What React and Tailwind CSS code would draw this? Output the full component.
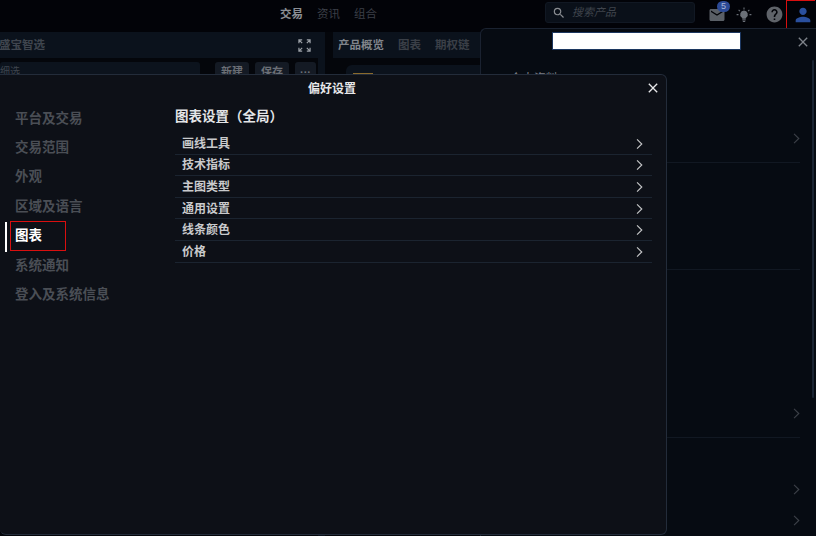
import React from 'react';
import { MdEmail, MdHelp, MdPerson, MdClose, MdSearch } from 'react-icons/md';

const navItems = ['平台及交易', '交易范围', '外观', '区域及语言', '图表', '系统通知', '登入及系统信息'];
const rows = ['画线工具', '技术指标', '主图类型', '通用设置', '线条颜色', '价格'];
const font = "font-['Liberation_Sans','Noto_Sans_CJK_SC',sans-serif]";

const Chevron = ({ className }) => (
  <svg viewBox="0 0 8 12" fill="none" stroke="currentColor" strokeWidth="1.3" className={className}>
    <path d="M1.2 0.8 L6.6 6 L1.2 11.2" />
  </svg>
);

const Bulb = () => (
  <svg viewBox="0 0 16 16" className="w-4 h-4 text-[#6b7078]" fill="currentColor">
    <path d="M8 3.6a3.9 3.9 0 0 0-2.3 7c.4.3.6.7.6 1.1h3.4c0-.4.2-.8.6-1.1A3.9 3.9 0 0 0 8 3.6z" />
    <rect x="6.3" y="12.3" width="3.4" height="1.1" />
    <rect x="6.8" y="13.9" width="2.4" height="1.1" />
    <path d="M8 .6v1.9M2.6 2.8l1.3 1.3M13.4 2.8l-1.3 1.3M.6 7.6h1.9M13.5 7.6h1.9" stroke="currentColor" strokeWidth="1.1" />
  </svg>
);

const TopBar = () => (
  <div className="relative h-[32px] flex items-start bg-[#020308] shrink-0">
    <div className="flex-1 pl-[280px] pt-[6px] flex gap-[14px] text-[11.5px] leading-[16px]">
      <span className="text-[#8b8e94] font-bold">交易</span>
      <span className="text-[#3b3f47]">资讯</span>
      <span className="text-[#3b3f47]">组合</span>
    </div>
    <div className="mt-[2px] w-[150px] h-[21px] flex items-center gap-[6px] pl-[6px] bg-[#0a1019] border border-[#111823] rounded-[3px]">
      <MdSearch className="w-[14px] h-[14px] text-[#8a8d92]" />
      <span className="text-[#3f444c] text-[11px] italic">搜索产品</span>
    </div>
    <div className="relative w-[121px] h-[29px] pl-[13px] flex items-center">
      <div className="relative w-[18px] h-[18px] shrink-0">
        <MdEmail className="w-[18px] h-[18px] text-[#5a5f66]" />
        <span className="absolute -top-[5px] left-[9px] w-[13px] h-[11px] rounded-full bg-[#2c4a96] text-[#a9b6d6] text-[9px] leading-[11px] text-center">5</span>
      </div>
      <div className="ml-[10px] shrink-0"><Bulb /></div>
      <MdHelp className="ml-[13px] w-[19px] h-[19px] text-[#5f6369] shrink-0" />
      <div className="ml-[2px] w-[29px] h-[29px] shrink-0 border border-r-0 border-[#d90f0f] pl-[3px] flex items-center justify-center">
        <MdPerson className="w-[22px] h-[22px] text-[#2a4f9e]" />
      </div>
    </div>
  </div>
);

const Background = () => (
  <div className="flex-1 flex gap-[8px] overflow-hidden">
    <div className="w-[325px] bg-[#0b121c] pr-[7px]">
      <div className="h-[26px] pt-[1px] flex items-center justify-between pr-[7px]">
        <span className="text-[#3f454e] text-[11.5px] font-bold -ml-[1px]">盛宝智选</span>
        <svg viewBox="0 0 14 14" className="w-[13px] h-[13px] text-[#9ba0a6]" fill="none" stroke="currentColor" strokeWidth="1.3">
          <path d="M1 4.5V1h3.5M9.5 1H13v3.5M1 9.5V13h3.5M13 9.5V13H9.5M1 1l3.5 3.5M13 1L9.5 4.5M1 13l3.5-3.5M13 13L9.5 9.5" />
        </svg>
      </div>
      <div className="h-full bg-[#04060b] pt-[4px] flex items-start pr-[2px]">
        <div className="w-[200px] h-[20px] bg-[#0c131d] rounded-[3px] text-[10px] leading-[20px] text-[#3f454e]">细选</div>
        <div className="flex gap-[6px] ml-[15px]">
          <div className="w-[34px] h-[20px] bg-[#141a24] rounded-[3px] text-center text-[11px] font-bold leading-[20px] text-[#6b6f76]">新建</div>
          <div className="w-[34px] h-[20px] bg-[#141a24] rounded-[3px] text-center text-[11px] font-bold leading-[20px] text-[#6b6f76]">保存</div>
          <div className="w-[21px] h-[20px] bg-[#141a24] rounded-[3px] text-center text-[11px] font-bold leading-[20px] text-[#6b6f76]">···</div>
        </div>
      </div>
    </div>
    <div className="flex-1 flex flex-col">
      <div className="h-[26px] pt-[1px] bg-[#0b121c] flex items-center gap-[14px] pl-[5px] text-[11.5px] font-bold shrink-0">
        <span className="text-[#80848b]">产品概览</span>
        <span className="text-[#3a3f47]">图表</span>
        <span className="text-[#3a3f47]">期权链</span>
      </div>
      <div className="pt-[7px] pl-[13px]">
        <div className="h-[40px] bg-[#0b121c] rounded-tl-[6px] pl-[7px] pt-[8px]">
          <div className="w-[20px] h-[2px] bg-[#8a6a2c]" />
        </div>
      </div>
    </div>
  </div>
);

const SidePanel = () => (
  <div className="absolute top-[28px] left-[480px] right-0 bottom-0 bg-[#060b12] border-l border-t border-[#1a2230] rounded-tl-[6px]">
    <div className="absolute left-[71px] top-[3px] w-[189px] h-[18px] bg-white border border-[#1c3760]" />
    <MdClose className="absolute top-[5px] right-[5px] w-[16px] h-[16px] text-[#7e838a]" />
    <div className="absolute right-[2px] top-[31px] w-[2px] h-[338px] bg-[#1a2432] rounded-full" />
    <div className="ml-[11px] mr-[16px] pt-[43px] text-[#3c4048]">
      <div className="h-[57px] flex items-start gap-[11px] text-[12px] leading-[14px] text-[#7a7e85]">
        <MdPerson className="w-[12px] h-[12px] -ml-[2px]" />
        <span className="-ml-[3px]">个人资料</span>
      </div>
      <div className="h-[33px] flex items-start justify-end pt-[4px]"><Chevron className="w-[7px] h-[11px]" /></div>
      <div className="h-[107px] border-t border-[#111822]" />
      <div className="h-[168px] border-t border-[#111822] flex items-end justify-end pb-[18px]"><Chevron className="w-[7px] h-[11px]" /></div>
      <div className="h-[58px] border-t border-[#111822] flex items-end justify-end"><Chevron className="w-[7px] h-[11px]" /></div>
      <div className="flex justify-end pt-[20px]"><Chevron className="w-[7px] h-[11px]" /></div>
    </div>
  </div>
);

const PrefsModal = () => (
  <div className="absolute top-[74px] left-0 w-[667px] h-[461px] bg-[#0d1017] border border-l-0 border-[#232c3a] rounded-r-[6px] rounded-bl-[6px]">
    <div className="relative h-[27px] flex items-center justify-center pr-[2px]">
      <span className="text-[#e6e7e9] text-[12px] font-bold">偏好设置</span>
      <MdClose className="absolute right-[5px] top-[5px] w-[16px] h-[16px] text-[#e6e7e9]" />
    </div>
    <div className="flex">
      <div className="w-[175px] pt-[2px]">
        {navItems.map((item) =>
          item === '图表' ? (
            <div key={item} className="relative h-[29.4px] pl-[15px] flex items-center text-[13.5px] font-bold text-white">
              <span className="absolute left-[5px] top-0 w-[2px] h-[30px] bg-white" />
              <span className="absolute left-[10px] -top-[1px] w-[56px] h-[30px] border border-[#d90f0f]" />
              {item}
            </div>
          ) : (
            <div key={item} className="h-[29.4px] pl-[15px] flex items-center text-[13.5px] font-bold text-[#4a4e55]">
              {item}
            </div>
          )
        )}
      </div>
      <div className="w-[477px]">
        <div className="h-[31px] pb-[1px] flex items-center text-[13.5px] font-bold text-[#e4e5e7]">图表设置（全局）</div>
        {rows.map((row) => (
          <div key={row} className="h-[21.6px] pl-[7px] pr-[9px] pt-[1px] flex items-center justify-between border-b border-[#1b2430] text-[12px] font-bold text-[#c9cacc]">
            {row}
            <Chevron className="w-[7px] h-[12px] text-[#c5c6c8]" />
          </div>
        ))}
      </div>
    </div>
  </div>
);

export default function App() {
  return (
    <div className={`relative w-[816px] h-[536px] overflow-hidden flex flex-col bg-[#04060b] ${font}`}>
      <TopBar />
      <Background />
      <SidePanel />
      <PrefsModal />
    </div>
  );
}
